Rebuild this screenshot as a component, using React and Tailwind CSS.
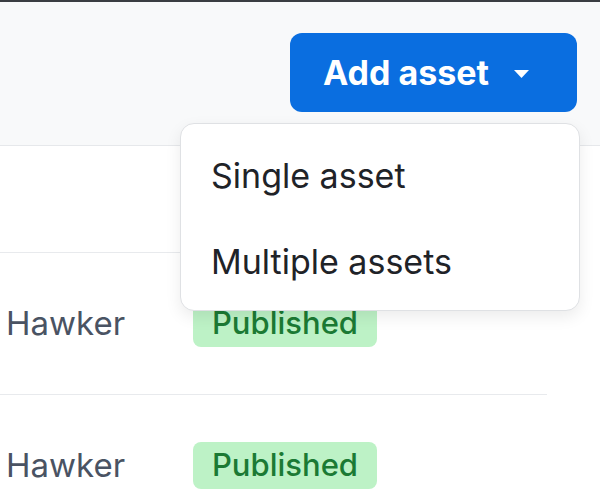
import { useState } from 'react';

const rows = [{ name: 'Hawker', status: 'Published' }, { name: 'Hawker', status: 'Published' }];

export default function App() {
  const [open, setOpen] = useState(true);

  return (
    <div className="relative h-[500px] w-[600px] overflow-hidden bg-white font-['Inter',sans-serif]">
      {/* Toolbar */}
      <div className="flex h-[146px] justify-end border-t-2 border-b border-t-[#3a3d42] border-b-[#e6e8eb] bg-[#f8f9fa] pt-[31px] pr-[23px]">
        <button
          onClick={() => setOpen(!open)}
          className="flex h-[79px] w-[287px] items-center rounded-[12px] bg-[#0a6ee0] pl-[33px] text-[34px] font-bold text-white"
        >
          Add asset
          <svg className="ml-[25px] mt-[2px]" width="15" height="8" viewBox="0 0 15 8">
            <path d="M0 0h15L7.5 8z" fill="white" />
          </svg>
        </button>
      </div>

      {/* Dropdown */}
      {open && (
        <div className="absolute top-[123px] left-[180px] flex h-[188px] w-[400px] flex-col rounded-[14px] border border-[#dfe1e4] bg-white pt-[18px] shadow-[0_6px_16px_rgba(0,0,0,0.08)]">
          <div className="flex h-[66px] items-center pl-[30px] text-[34px] text-[#1f2328]">Single asset</div>
          <div className="mt-[20px] flex h-[66px] items-center pl-[30px] text-[34px] text-[#1f2328]">Multiple assets</div>
        </div>
      )}

      {/* Table */}
      <div className="w-[547px]">
        <div className="h-[107px] border-b border-[#e8eaed]" />
        {rows.map((r, i) => (
          <div key={i} className="flex h-[142px] items-center border-b border-[#e8eaed]">
            <div className="w-[193px] pl-[6px] text-[33px] text-[#4a5363]">{r.name}</div>
            <span className="flex h-[47px] w-[184px] items-center justify-center rounded-[8px] bg-[#bdf2c6] text-[31px] font-medium text-[#1b7a34]">
              {r.status}
            </span>
          </div>
        ))}
      </div>
    </div>
  );
}
